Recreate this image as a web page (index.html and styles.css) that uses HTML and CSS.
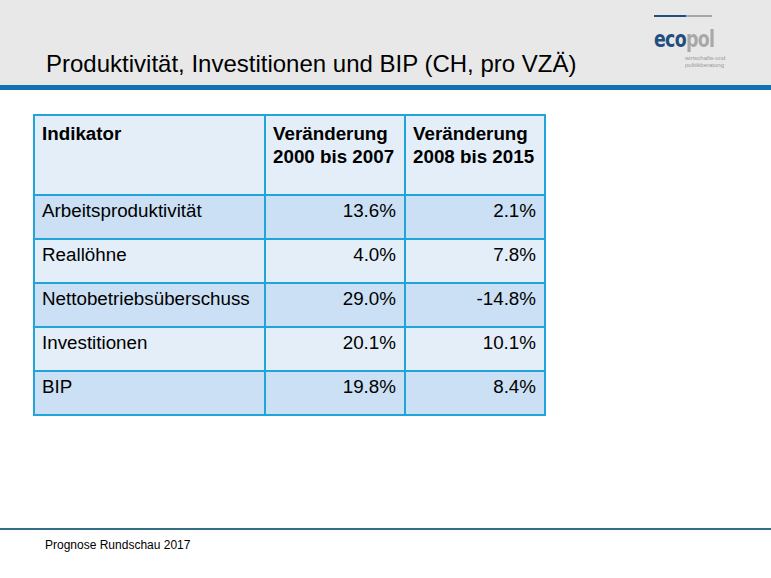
FILE: index.html
```html
<!DOCTYPE html>
<html lang="de">
<head>
<meta charset="utf-8">
<link rel="stylesheet" href="styles.css">
</head>
<body>
<header class="head">
  <h1 class="title">Produktivität, Investitionen und BIP (CH, pro VZÄ)</h1>
  <div class="logo">
    <div class="logo-rule"><span class="r1"></span><span class="r2"></span></div>
    <div class="logo-word"><span class="eco">eco</span><span class="pol">pol</span></div>
    <div class="logo-sub">wirtschafts-und<br>politikberatung</div>
  </div>
</header>
<div class="bar"></div>
<main class="main">
  <table class="tbl">
    <thead>
      <tr class="hrow">
        <th class="c1">Indikator</th>
        <th class="c2">Veränderung<br>2000 bis 2007</th>
        <th class="c3">Veränderung<br>2008 bis 2015</th>
      </tr>
    </thead>
    <tbody>
      <tr class="dark"><td class="c1">Arbeitsproduktivität</td><td class="num">13.6%</td><td class="num">2.1%</td></tr>
      <tr class="light"><td class="c1">Reallöhne</td><td class="num">4.0%</td><td class="num">7.8%</td></tr>
      <tr class="dark"><td class="c1">Nettobetriebsüberschuss</td><td class="num">29.0%</td><td class="num">-14.8%</td></tr>
      <tr class="light"><td class="c1">Investitionen</td><td class="num">20.1%</td><td class="num">10.1%</td></tr>
      <tr class="dark"><td class="c1">BIP</td><td class="num">19.8%</td><td class="num">8.4%</td></tr>
    </tbody>
  </table>
</main>
<footer class="foot">
  <div class="foot-line"></div>
  <div class="foot-text">Prognose Rundschau 2017</div>
</footer>
</body>
</html>
```
FILE: styles.css
```css
html, body {
  margin: 0;
  padding: 0;
  background: #ffffff;
  font-family: "Liberation Sans", Arial, sans-serif;
  color: #000;
}
body {
  width: 771px;
  height: 578px;
  overflow: hidden;
  display: flex;
  flex-direction: column;
}
.head {
  height: 85px;
  background: #e8e8e8;
  display: flex;
  justify-content: space-between;
  box-sizing: border-box;
}
.title {
  margin: 50px 0 0 46px;
  font-weight: normal;
  font-size: 24px;
  line-height: 28px;
  white-space: nowrap;
}
.logo {
  width: 72px;
  margin: 15px 45px 0 0;
  display: flex;
  flex-direction: column;
}
.logo-rule {
  display: flex;
  height: 2px;
}
.logo-rule .r1 { width: 32px; background: #1e4f80; }
.logo-rule .r2 { width: 26px; background: #a6a6a6; }
.logo-word {
  margin-top: 10px;
  font-family: "DejaVu Sans Condensed", "DejaVu Sans", sans-serif;
  font-stretch: condensed;
  font-size: 23px;
  line-height: 24px;
  letter-spacing: -0.8px;
  transform: scaleX(0.84);
  transform-origin: left;
}
.eco { color: #1f4e7f; font-weight: bold; }
.pol { color: #a8a8a8; font-weight: bold; }
.logo-sub {
  margin: 4px 0 0 31px;
  font-size: 6px;
  line-height: 7px;
  color: #9a9a9a;
  white-space: nowrap;
}
.bar {
  height: 5px;
  background: #1271b3;
}
.main {
  flex: 1;
  padding: 24px 0 0 33px;
}
.tbl {
  border-collapse: collapse;
  font-size: 18.8px;
  line-height: 23px;
}
.tbl th, .tbl td {
  border: 2px solid #20a4da;
  padding: 0 8px 0 7px;
  vertical-align: top;
}
.tbl th {
  text-align: left;
  font-weight: bold;
  background: #e3eef9;
}
.hrow { height: 80px; }
.hrow th { padding-top: 6px; }
.tbl td { height: 44px; box-sizing: border-box; padding-top: 3px; }
.c1 { width: 214px; }
.c2 { width: 123px; }
.c3 { width: 123px; }
.num { text-align: right; }
.dark td { background: #cbe0f5; }
.light td { background: #e3eef9; }
.foot {
  height: 50px;
  display: flex;
  flex-direction: column;
}
.foot-line {
  height: 2px;
  background: #356c86;
}
.foot-text {
  margin: 8px 0 0 45px;
  font-size: 12px;
  line-height: 14px;
}
```
